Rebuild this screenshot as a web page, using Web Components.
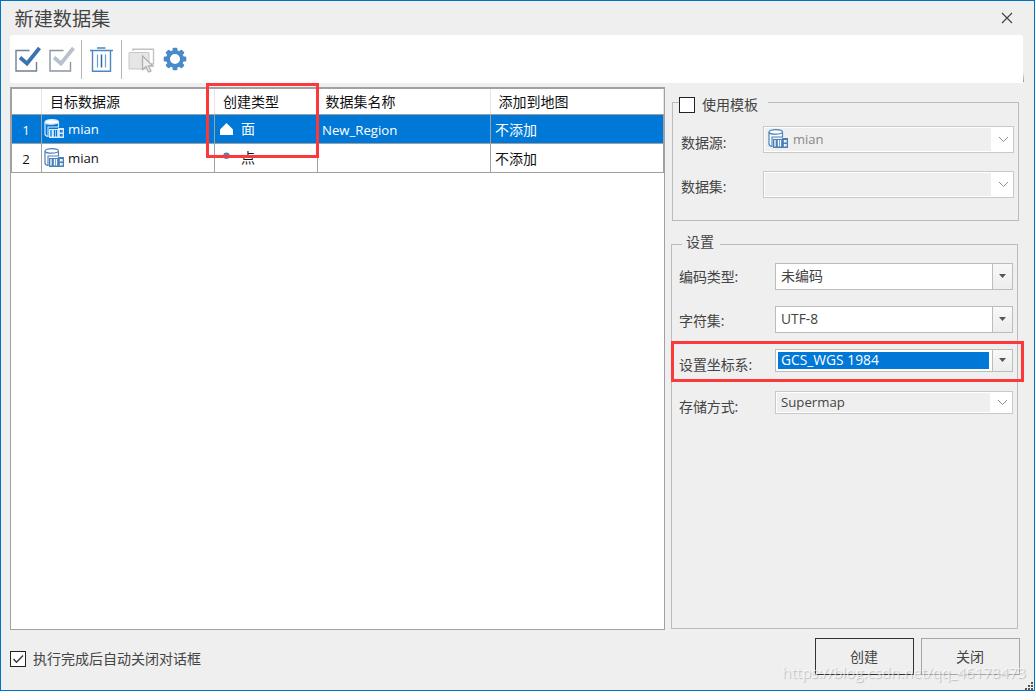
<!DOCTYPE html>
<html lang="zh-CN">
<head>
<meta charset="utf-8">
<title>新建数据集</title>
<style>
html,body{margin:0;height:100%;overflow:hidden}
body{font:14px/20px "Open Sans","Noto Sans CJK SC",sans-serif;color:#444}
</style>
</head>
<body>
<dataset-dialog></dataset-dialog>
<script>
const define = (name, html) => customElements.define(name, class extends HTMLElement {
  constructor() {
    super();
    const t = document.createElement('template');
    t.innerHTML = typeof html === 'function' ? html(this) : html;
    this.attachShadow({ mode: 'open' }).append(t.content.cloneNode(true));
  }
});

define('udb-icon', `
<style>:host{display:block;width:20px;height:20px;flex:none;color:#4a80b8}svg{display:block}</style>
<svg width="20" height="20" fill="none" stroke="currentColor">
<path d="M1 3V14.500q0 2 3 2.500V8H15V3Z" fill="var(--body,#fff)" stroke="none"/>
<path d="M1 3.200V15q0 2 3.500 2.500M14.500 3.200V8.500" stroke-width="1.200"/>
<ellipse cx="7.750" cy="2.900" rx="6.750" ry="2.300" fill="var(--top,#fff)" stroke-width="1.200"/>
<path d="M4 17.500V8H14" stroke-width="1.100"/>
<path d="M5 10H14V9H20V19H5Z" fill="var(--plate,#4a80b8)" stroke="none"/>
<path d="M7 11V17.500M10.500 11V17.500M12.500 11V17.500M16.500 11V13.500M18 11V13.500M16.500 15V17.500M18 15V17.500" stroke="var(--ink,#fff)" stroke-width="1.300"/>
</svg>`);

define('check-box', h => `
<style>:host{display:flex;align-items:center;gap:7px;height:20px;white-space:nowrap}
i{box-sizing:border-box;width:16px;height:16px;border:1px solid #222;background:#fff;flex:none}svg{display:block}</style>
<i>${h.hasAttribute('checked') ? '<svg width="14" height="14"><path d="M2.500 7L5.500 10.300L12 3.500" fill="none" stroke="#333" stroke-width="1.300"/></svg>' : ''}</i><slot></slot>`);

define('tool-bar', `
<style>:host{display:flex;box-sizing:border-box;height:48px;width:1013px;background:#fff;border-radius:2px;padding-left:4px;align-items:center}
svg{display:block;flex:none}i{width:1px;height:39px;background:#b5b5b5}</style>
<svg width="30" height="32" fill="none"><path d="M15.500 7.500H2V28H22.500V19" stroke="#728092" stroke-width="1.400"/><path d="M6 14.500L13 20.500L25.500 5" stroke="#3c73af" stroke-width="3.800"/></svg>
<svg width="30" height="32" fill="none" style="margin-left:4px"><path d="M15.500 7.500H2V28H22.500V19" stroke="#8a94a3" stroke-width="1.400"/><path d="M6 14.500L13 20.500L25.500 5" stroke="#b8c1cc" stroke-width="3.800"/></svg>
<i style="margin-left:3px"></i>
<svg width="24" height="28" style="margin-left:7px" fill="none" stroke="#4d86bf"><path d="M1 5.500H24M8 3H16.500M3.500 5.500V26.300H21.500V5.500" stroke-width="1.400"/><path d="M8.500 9.500V22.500M16.500 9.500V22.500" stroke="#66a1d5" stroke-width="1.200"/><path d="M12.500 9.500V22.500" stroke="#35679b" stroke-width="1.500"/></svg>
<i style="margin-left:8px"></i>
<svg width="27" height="28" style="margin-left:6px" fill="none"><path d="M5 6V4.200H25.500V19H22" stroke="#c2c2c2" stroke-width="1.400"/><path d="M1 7.500H21V24H1Z" fill="#e6e6e6" stroke="#c7c7c7"/><path d="M14.500 11V24.500L18 21.500L20.500 27L23 26L20.500 21H25Z" fill="#eee" stroke="#b0b0b0" stroke-width="1.300"/></svg>
<svg width="24" height="24" style="margin-left:8px" viewBox="-12 -12 24 24"><g fill="#4a8acb"><circle r="8.900"/><rect x="-2.400" y="-11.300" width="4.800" height="22.600" rx="1"/><rect x="-11.300" y="-2.400" width="22.600" height="4.800" rx="1"/><g transform="rotate(45)"><rect x="-2.400" y="-11.300" width="4.800" height="22.600" rx="1"/><rect x="-11.300" y="-2.400" width="22.600" height="4.800" rx="1"/></g></g><circle r="5" fill="#fff"/></svg>`);

define('table-row', `
<style>:host{display:grid;grid-template-columns:30px 173px 103px 173px 173px;height:29px;box-sizing:border-box;border-bottom:1px solid #a0a0a0;color:#111;--line:#a0a0a0}
:host([head]){height:26px;--line:#e5e5e5}
:host([selected]){background:#0078d7;color:#fff}
::slotted(*){box-sizing:border-box;border-right:1px solid var(--line);display:flex;align-items:center;padding-left:4px;white-space:nowrap}
:host([head]) ::slotted(*){padding-left:8px}</style><slot></slot>`);

define('dataset-table', `
<style>:host{display:block;box-sizing:border-box;width:655px;height:543px;border:1px solid #a0a0a5;border-top-width:2px;background:#fff;font-size:13.200px}
.rows{width:652px;border-left:1px solid #a0a0a0}
.cjk{font-size:14px}.n{justify-content:center;padding:2px 1px 0 0!important}
.late{padding-left:7.500px!important}
.name{padding-top:1px}
udb-icon{margin-left:-2px;margin-right:4px}
[selected] udb-icon{color:#d9eaff;--body:#0078d7;--top:#fff;--plate:#d9eaff;--ink:#0078d7}
svg{display:block;flex:none}</style>
<div class="rows">
<table-row head class="cjk"><span></span><span>目标数据源</span><span>创建类型</span><span class="late">数据集名称</span><span class="late">添加到地图</span></table-row>
<table-row selected><span class="n">1</span><span><udb-icon></udb-icon>mian</span><span class="cjk"><svg width="15" height="14" style="margin-right:7px"><path d="M1 13V7.500L7.500 1L14 7.500V13Z" fill="#fff"/></svg>面</span><span class="name">New_Region</span><span class="cjk name">不添加</span></table-row>
<table-row><span class="n">2</span><span><udb-icon></udb-icon>mian</span><span class="cjk"><svg width="15" height="14" style="margin-right:7px"><circle cx="7.500" cy="4.700" r="3.200" fill="#4e81b7"/></svg>点</span><span></span><span class="cjk name">不添加</span></table-row>
</div>`);

define('combo-box', h => {
  const off = h.hasAttribute('disabled');
  return `
<style>:host{display:flex;box-sizing:border-box;height:27px;border:1px solid #bcbcbc;background:#fff;color:#444;font-size:13.800px}
:host([short]){height:23px}:host([disabled]){border-color:#c9c9c9;font-size:13px}
:host([short][disabled]){font-size:13.200px}
:host([source]){color:#888}
.v{flex:1;display:flex;align-items:center;padding-left:5px;padding-bottom:1px;white-space:nowrap}
:host([disabled]) .v{background:#efefef;margin:1px 0 1px 1px;padding:0 0 1px 4px}
:host([source]) .v{padding-left:3px}
:host([picked]) .v{background:#0078d7;color:#fff;margin:2px 3px 2px 2px;padding:0 0 1px 3px}
.b{width:19px;border-left:1px solid #bcbcbc;background:linear-gradient(#f8f8f8,#ededed);display:flex;align-items:center;justify-content:center}
:host([disabled]) .b{border:0;background:#fff;width:22px}
svg{display:block}</style><div class="v"><slot></slot></div><div class="b">${off
 ? '<svg width="11" height="7" style="margin-left:2px"><path d="M1 1L5.500 5.500L10 1" fill="none" stroke="#8f8f8f"/></svg>'
 : '<svg width="7" height="4" style="margin-bottom:1px"><path d="M0 0H7L3.500 4Z" fill="#555"/></svg>'}</div>`;
});

define('field-row', h => `
<style>:host{display:flex;align-items:flex-start}
.l{width:var(--label,96px);flex:none;padding-top:${h.getAttribute('drop') || 4}px;white-space:nowrap;letter-spacing:-.1px}
.c{flex:1}</style><div class="l">${h.getAttribute('label')}</div><div class="c"><slot></slot></div>`);

define('group-box', `
<style>:host{display:block;box-sizing:border-box;border:1px solid #bcbcbc}
.legend{width:max-content;height:20px}
::slotted([slot=legend]){background:#efefef}</style>
<div class="legend"><slot name="legend"></slot></div><slot></slot>`);

define('push-button', `
<style>:host{display:flex;align-items:center;justify-content:center;box-sizing:border-box;width:99px;height:37px;border:1px solid #a6a6a6;padding:1px 1px 0 0}
:host([primary]){border-color:#333}</style><slot></slot>`);

define('mark-frame', `
<style>:host{position:absolute;box-sizing:border-box;border:3px solid #fd3838;pointer-events:none}</style>`);

define('dataset-dialog', `
<style>
:host{display:flex;flex-direction:column;position:relative;box-sizing:border-box;width:1035px;height:691px;border:1px solid #0072c6;background:#efefef;padding-left:9px}
header{height:34px;display:flex;justify-content:space-between;align-items:center;box-sizing:border-box;padding:1px 21px 0 4.500px;font-size:19.200px}
header svg{display:block;margin-top:-2px}
main{display:flex;height:543px;margin-top:4px}
aside{width:347px;margin-left:6px}
.tpl{width:347px;height:119px;margin:15px 0 0 1px}
.tpl check-box{padding:0 10px 0 0;margin-left:0}
.tpl field-row{--label:82px;margin:0 4px 0 8px}
.set{height:385px;width:347px;margin-top:23px}
.set field-row{margin:0 4px 0 7px}
footer{display:flex;height:60px;align-items:flex-start}
footer check-box{margin-top:19px}
.buttons{display:flex;gap:7px;margin:8px 14px 0 auto}
.mark{position:absolute;left:781px;top:660px;font:15px/22px "Open Sans",sans-serif;color:rgba(255,255,255,.65);text-shadow:1px 1px 1px rgba(100,100,100,.35);white-space:nowrap}
.grip{position:absolute;right:1px;bottom:0}
.edge{position:absolute;left:1022px;top:71px;width:1px;height:10px;background:linear-gradient(#efefef,#999)}
</style>
<header><span>新建数据集</span><svg width="12" height="12"><path d="M1 1L11 11M11 1L1 11" stroke="#444" stroke-width="1.200"/></svg></header>
<tool-bar></tool-bar>
<main>
<dataset-table></dataset-table>
<aside>
<group-box class="tpl"><check-box slot="legend" style="margin:-8px 0 0 6px">使用模板</check-box>
<field-row label="数据源:" drop="7" style="margin-top:11px"><combo-box disabled source><udb-icon style="margin-right:5px"></udb-icon>mian</combo-box></field-row>
<field-row label="数据集:" drop="6" style="margin-top:18px"><combo-box disabled></combo-box></field-row>
</group-box>
<group-box class="set"><div slot="legend" style="margin:-13px 0 0 10px;padding:0 6px 0 4px">设置</div>
<field-row label="编码类型:" style="margin-top:11px"><combo-box><span style="font-size:14px">未编码</span></combo-box></field-row>
<field-row label="字符集:" drop="5" style="margin-top:16px"><combo-box>UTF-8</combo-box></field-row>
<field-row label="设置坐标系:" drop="6" style="margin-top:16px"><combo-box short picked>GCS_WGS 1984</combo-box></field-row>
<field-row label="存储方式:" drop="6" style="margin-top:16px"><combo-box short disabled>Supermap</combo-box></field-row>
</group-box>
</aside>
</main>
<footer><check-box checked>执行完成后自动关闭对话框</check-box><div class="buttons"><push-button primary>创建</push-button><push-button>关闭</push-button></div></footer>
<div class="edge"></div>
<svg class="grip" width="8" height="8" fill="#555"><path d="M6 0h2v2H6zM3 3h2v2H3zM6 3h2v2H6zM0 6h2v2H0zM3 6h2v2H3zM6 6h2v2H6z"/></svg>
<div class="mark">https://blog.csdn.net/qq_46178473</div>
<mark-frame style="left:205px;top:82px;width:113px;height:75px"></mark-frame>
<mark-frame style="left:670px;top:340px;width:353px;height:41px"></mark-frame>`);
</script>
</body>
</html>
